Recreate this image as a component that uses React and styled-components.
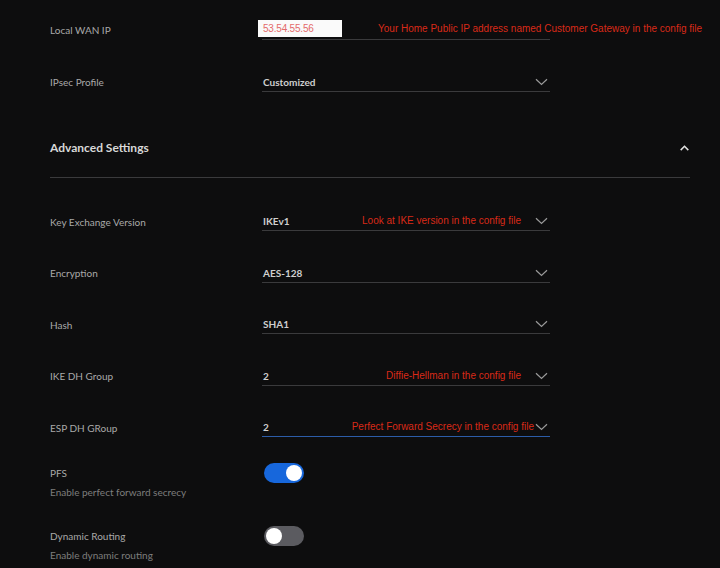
import React from 'react';
import styled, { createGlobalStyle } from 'styled-components';

const GlobalStyle = createGlobalStyle`
  html, body {
    margin: 0;
    padding: 0;
    background: #0d0d0e;
  }
  body {
    font-family: Lato, "Open Sans", sans-serif;
  }
`;

const Page = styled.div`
  width: 720px;
  height: 568px;
  overflow: hidden;
  box-sizing: border-box;
  padding: 4px 30px 0 50px;
  background: #0d0d0e;
`;

const Row = styled.div`
  display: grid;
  grid-template-columns: 212px 288px;
  align-items: center;
  height: ${({ h }) => h || 52}px;
`;

const Label = styled.div`
  font-size: 10px;
  color: #a9a9a9;
  line-height: 14px;
`;

const Sub = styled.div`
  font-size: 10px;
  color: #7d7d7d;
  line-height: 14px;
  margin-top: 5px;
`;

const Field = styled.div`
  display: flex;
  align-items: center;
  height: 18px;
  border-bottom: 1px solid ${({ active }) => (active ? '#2c5ca8' : '#3a3a3c')};
  padding-left: 1px;
  position: relative;
`;

const Value = styled.span`
  font-size: 10px;
  font-weight: 700;
  color: #cfcfcf;
  line-height: 14px;
`;

const Spacer = styled.span`
  margin-left: auto;
`;

const Note = styled.span`
  margin-left: auto;
  margin-right: ${({ gap }) => gap}px;
  font-family: "Liberation Sans", Arial, sans-serif;
  font-size: 10px;
  color: #d92a18;
  white-space: nowrap;
  line-height: 14px;
`;

const IpBox = styled.div`
  position: absolute;
  left: -4px;
  top: -1px;
  width: 84px;
  height: 17px;
  box-sizing: border-box;
  background: #fafafa;
  color: #e46a6a;
  font-family: "Liberation Sans", Arial, sans-serif;
  font-size: 10px;
  letter-spacing: -0.2px;
  line-height: 17px;
  padding-left: 5px;
`;

const WideNote = styled(Note)`
  position: absolute;
  left: 116px;
  top: 1px;
  margin: 0;
`;

const Chevron = styled.svg`
  width: ${({ w }) => w || 13}px;
  height: 8px;
  flex: none;
  margin-right: ${({ mr }) => (mr === undefined ? 2 : mr)}px;
`;

const Header = styled.div`
  display: flex;
  align-items: center;
  justify-content: space-between;
  height: 70px;
  box-sizing: border-box;
  padding: 10px 0 0 0;
  border-bottom: 1px solid #3a3a3c;
  margin-bottom: 18px;
`;

const HeaderTitle = styled.div`
  font-size: 12px;
  font-weight: 700;
  color: #d8d8d8;
`;

const ToggleRow = styled.div`
  display: grid;
  grid-template-columns: 214px 40px;
  align-items: start;
  margin-top: ${({ mt }) => mt}px;
`;

const Toggle = styled.div`
  width: 40px;
  height: 20px;
  border-radius: 10px;
  background: ${({ on }) => (on ? '#1767dc' : '#5b5b60')};
  position: relative;
  margin-top: -3px;
  &::after {
    content: '';
    position: absolute;
    top: 2px;
    left: ${({ on }) => (on ? '22px' : '2px')};
    width: 16px;
    height: 16px;
    border-radius: 50%;
    background: #fff;
  }
`;

const Down = () => (
  <Chevron viewBox="0 0 13 8">
    <path d="M1 1.2 L6.5 6.5 L12 1.2" fill="none" stroke="#9a9a9a" strokeWidth="1.2" />
  </Chevron>
);

const Up = () => (
  <Chevron viewBox="0 0 13 8" w={11} mr={0}>
    <path d="M2 6.5 L6.5 2 L11 6.5" fill="none" stroke="#e0e0e0" strokeWidth="1.8" />
  </Chevron>
);

const selects = [
  { label: 'Key Exchange Version', value: 'IKEv1', note: 'Look at IKE version in the config file', gap: 14 },
  { label: 'Encryption', value: 'AES-128' },
  { label: 'Hash', value: 'SHA1' },
  { label: 'IKE DH Group', value: '2', note: 'Diffie-Hellman in the config file', gap: 14 },
  { label: 'ESP DH GRoup', value: '2', note: 'Perfect Forward Secrecy in the config file', gap: 1, active: true },
];

export default function App() {
  return (
    <Page>
      <GlobalStyle />
      <Row>
        <Label>Local WAN IP</Label>
        <Field>
          <IpBox>53.54.55.56</IpBox>
          <WideNote>Your Home Public IP address named Customer Gateway in the config file</WideNote>
        </Field>
      </Row>
      <Row>
        <Label>IPsec Profile</Label>
        <Field>
          <Value>Customized</Value>
          <Spacer />
          <Down />
        </Field>
      </Row>
      <Header>
        <HeaderTitle>Advanced Settings</HeaderTitle>
        <Up />
      </Header>
      {selects.map((s) => (
        <Row key={s.label} h={51.5}>
          <Label>{s.label}</Label>
          <Field active={s.active}>
            <Value>{s.value}</Value>
            {s.note ? <Note gap={s.gap}>{s.note}</Note> : <Spacer />}
            <Down />
          </Field>
        </Row>
      ))}
      <ToggleRow mt={12}>
        <div>
          <Label>PFS</Label>
          <Sub>Enable perfect forward secrecy</Sub>
        </div>
        <Toggle on />
      </ToggleRow>
      <ToggleRow mt={30}>
        <div>
          <Label>Dynamic Routing</Label>
          <Sub>Enable dynamic routing</Sub>
        </div>
        <Toggle />
      </ToggleRow>
    </Page>
  );
}
